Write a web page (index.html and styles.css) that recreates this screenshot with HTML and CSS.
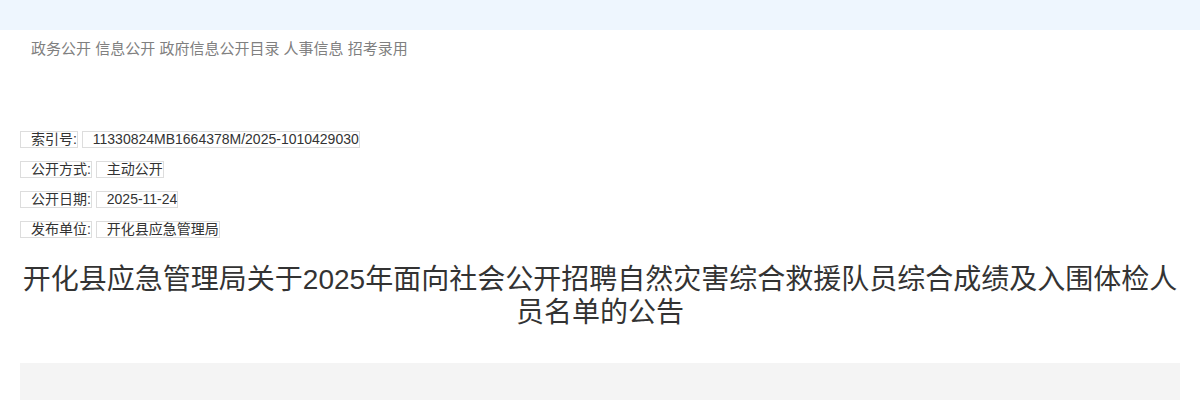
FILE: index.html
```html
<!DOCTYPE html>
<html lang="zh-CN">
<head>
    <meta charset="UTF-8">
    <title>开化县应急管理局</title>
    <link rel="stylesheet" href="styles.css">
</head>
<body>
    <div class="topbar"></div>
    <div class="crumbs">
        <a href="#">政务公开</a>
        <a href="#">信息公开</a>
        <a href="#">政府信息公开目录</a>
        <a href="#">人事信息</a>
        <a href="#">招考录用</a>
    </div>
    <div class="main">
        <div class="meta">
            <div class="meta-row"><span class="cell">索引号:</span> <span class="cell">11330824MB1664378M/2025-1010429030</span></div>
            <div class="meta-row"><span class="cell">公开方式:</span> <span class="cell">主动公开</span></div>
            <div class="meta-row"><span class="cell">公开日期:</span> <span class="cell">2025-11-24</span></div>
            <div class="meta-row"><span class="cell">发布单位:</span> <span class="cell">开化县应急管理局</span></div>
        </div>
        <h1 class="title">开化县应急管理局关于2025年面向社会公开招聘自然灾害综合救援队员综合成绩及入围体检人员名单的公告</h1>
        <div class="content"></div>
    </div>
</body>
</html>
```

FILE: styles.css
```css
body {
    margin: 0;
    font-family: "Liberation Sans", "Noto Sans CJK SC", sans-serif;
    color: #333;
    background: #fff;
}

.topbar {
    height: 30px;
    background: #eef6fe;
}

.crumbs {
    padding: 9px 0 0 31px;
    font-size: 15px;
    line-height: 20px;
}

.crumbs a {
    color: #808080;
    text-decoration: none;
}

.main {
    padding: 0 20px;
}

.meta {
    padding-top: 72px;
}

.meta-row {
    height: 30px;
    font-size: 14px;
    line-height: 15px;
}

.cell {
    display: inline-block;
    border: 1px solid #ddd;
    padding: 0 0 0 10px;
}

.title {
    margin: 12px 0 0;
    font-size: 28px;
    font-weight: normal;
    line-height: 33px;
    text-align: center;
    color: #333;
}

.content {
    margin-top: 34px;
    height: 60px;
    background: #f4f4f4;
}
```
